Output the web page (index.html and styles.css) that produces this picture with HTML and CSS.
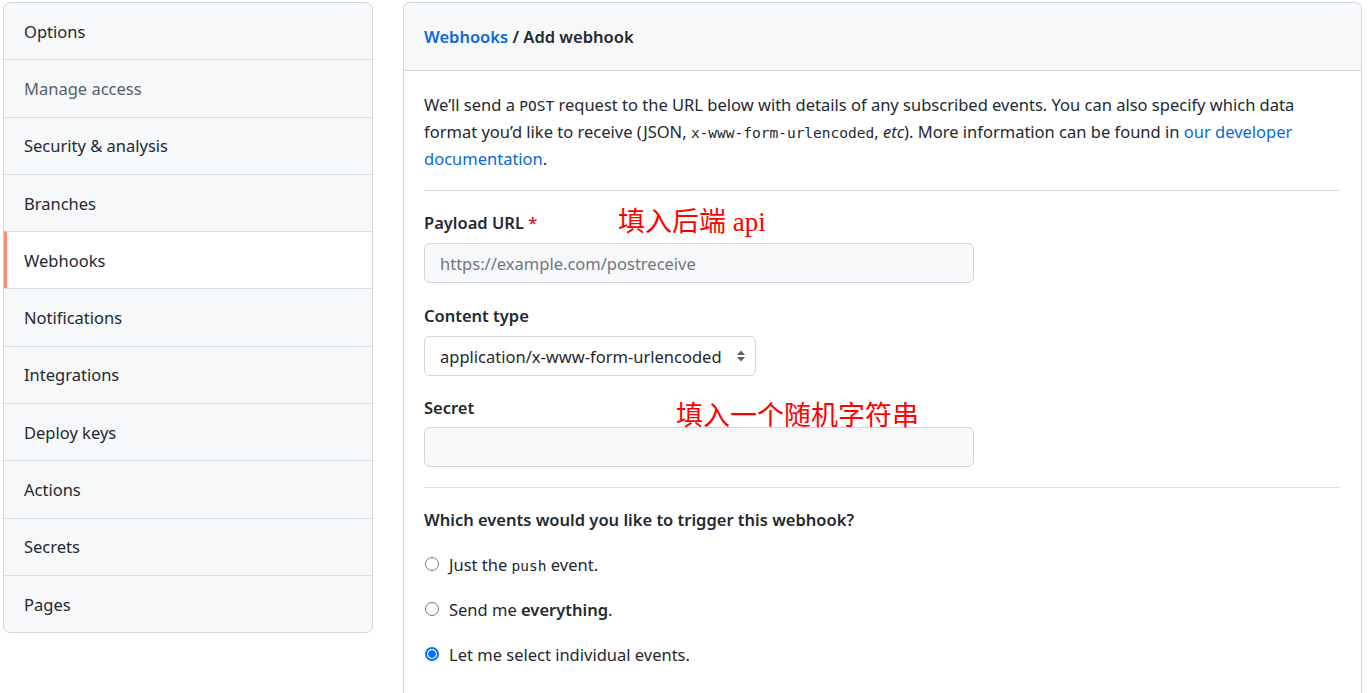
FILE: index.html
```html
<!DOCTYPE html>
<html lang="en">
<head>
<meta charset="utf-8">
<title>Add webhook</title>
<link rel="stylesheet" href="styles.css">
</head>
<body>
<div class="layout">
  <nav class="menu">
    <a class="menu-item">Options</a>
    <a class="menu-item muted">Manage access</a>
    <a class="menu-item">Security &amp; analysis</a>
    <a class="menu-item">Branches</a>
    <a class="menu-item selected">Webhooks</a>
    <a class="menu-item">Notifications</a>
    <a class="menu-item">Integrations</a>
    <a class="menu-item">Deploy keys</a>
    <a class="menu-item">Actions</a>
    <a class="menu-item">Secrets</a>
    <a class="menu-item">Pages</a>
  </nav>
  <main class="box">
    <header class="box-header">
      <h2 class="box-title"><a class="link">Webhooks</a> <span class="slash">/</span> Add webhook</h2>
    </header>
    <div class="box-body">
      <p class="intro">We’ll send a <code>POST</code> request to the URL below with details of any subscribed events. You can also specify which data format you’d like to receive (JSON, <code>x-www-form-urlencoded</code>, <em>etc</em>). More information can be found in <a class="link">our developer documentation</a>.</p>
      <hr class="sep">
      <div class="field">
        <label class="label">Payload URL <span class="req">*</span></label>
        <span class="note note-url">填入后端 api</span>
        <div class="input input-wide"><span class="placeholder">https://example.com/postreceive</span></div>
      </div>
      <div class="field field-gap">
        <label class="label">Content type</label>
        <div class="input select">
          <span>application/x-www-form-urlencoded</span>
          <svg class="caret" width="10" height="16" viewBox="0 0 10 16"><path d="M5 2.5 L9 7 H1 Z" fill="#57606a"/><path d="M5 13.5 L9 9 H1 Z" fill="#57606a"/></svg>
        </div>
      </div>
      <div class="field field-gap2">
        <label class="label label-tight">Secret</label>
        <span class="note note-secret">填入一个随机字符串</span>
        <div class="input input-wide"></div>
      </div>
      <hr class="sep sep2">
      <h3 class="label events-title">Which events would you like to trigger this webhook?</h3>
      <div class="radios">
        <label class="radio"><span class="dot"></span><span>Just the <code>push</code> event.</span></label>
        <label class="radio"><span class="dot"></span><span>Send me <strong>everything</strong>.</span></label>
        <label class="radio"><span class="dot checked"></span><span>Let me select individual events.</span></label>
      </div>
    </div>
  </main>
</div>
</body>
</html>
```
FILE: styles.css
```css
* { box-sizing: border-box; }
html, body { margin: 0; padding: 0; background: #fff; }
body {
  font-family: "Noto Sans", "Liberation Sans", sans-serif;
  font-size: 16.5px;
  color: #24292f;
}
.layout {
  display: flex;
  align-items: flex-start;
  padding: 2px 10px 0 3px;
  gap: 30px;
}
.menu {
  width: 370px;
  flex: none;
  display: flex;
  flex-direction: column;
  border: 1px solid #d0d7de;
  border-radius: 7px;
  background: #f6f8fa;
  overflow: hidden;
}
.menu-item {
  display: flex;
  align-items: center;
  height: 57.3px;
  padding-left: 20px;
  border-top: 1px solid #d8dee4;
  color: #24292f;
}
.menu-item:first-child { border-top: none; height: 56.3px; }
.menu-item.muted { color: #57606a; }
.menu-item.selected {
  background: #fff;
  border-left: 3px solid #fd8c73;
  padding-left: 17px;
}
.box {
  flex: 1;
  border: 1px solid #d0d7de;
  border-bottom: none;
  border-radius: 7px 7px 0 0;
  min-height: 700px;
}
.box-header {
  height: 68px;
  background: #f6f8fa;
  border-bottom: 1px solid #d0d7de;
  border-radius: 7px 7px 0 0;
  display: flex;
  align-items: center;
  padding-left: 20px;
}
.box-title {
  margin: 0;
  font-size: 16.5px;
  font-weight: 600;
}
.link { color: #0969da; text-decoration: none; }
.slash { color: #24292f; }
.box-body { padding: 20px 21px 0 20px; }
.intro {
  margin: 0;
  line-height: 27px;
}
code {
  font-family: "DejaVu Sans Mono", "Liberation Mono", monospace;
  font-size: 14.5px;
  line-height: 1;
}
.sep {
  border: 0;
  border-top: 1px solid #d8dee4;
  margin: 18px 0 20px;
  height: 0;
}
.field { position: relative; }
.field-gap { margin-top: 21px; }
.field-gap2 { margin-top: 20px; }
.label {
  display: block;
  margin: 0;
  font-size: 16.5px;
  font-weight: 600;
  line-height: 24px;
  margin-bottom: 8px;
}
.label-tight { margin-bottom: 7px; }
.req { color: #cf222e; }
.note {
  position: absolute;
  color: #f00;
  font-family: "Liberation Serif", "Noto Sans CJK SC", serif;
  font-size: 27px;
  line-height: 30px;
  white-space: nowrap;
}
.note-url { left: 194px; top: -4px; }
.note-secret { left: 252px; top: 5px; }
.input {
  height: 40px;
  border: 1px solid #d0d7de;
  border-radius: 6px;
  background: #f6f8fa;
  display: flex;
  align-items: center;
  padding: 0 15px;
}
.input-wide { width: 550px; }
.placeholder { color: #6e7781; }
.select {
  width: 332px;
  background: #fff;
  justify-content: space-between;
  padding-right: 9px;
}
.caret { flex: none; }
.sep2 { margin: 20px 0 20px; }
.events-title { margin-bottom: 20px; }
.radios {
  display: flex;
  flex-direction: column;
  gap: 21px;
}
.radio {
  display: flex;
  align-items: center;
  gap: 10px;
  height: 24px;
  padding-left: 1px;
}
.dot {
  width: 14px;
  height: 14px;
  border-radius: 50%;
  border: 1px solid #767676;
  background: #fff;
  flex: none;
}
.dot.checked {
  border: 2px solid #0075ff;
  background: radial-gradient(circle, #0075ff 0 3.5px, #fff 4px);
}
strong { font-weight: 600; }
```
